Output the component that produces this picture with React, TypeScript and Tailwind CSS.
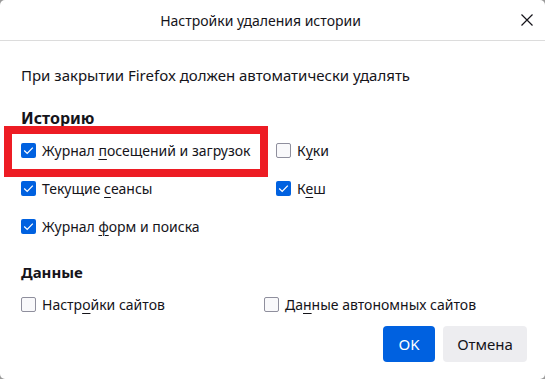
type Item = { label: string; key: number; checked: boolean };

const HISTORY: Item[][] = [
  [
    { label: 'Журнал посещений и загрузок', key: 7, checked: true },
    { label: 'Куки', key: 1, checked: false },
  ],
  [
    { label: 'Текущие сеансы', key: 8, checked: true },
    { label: 'Кеш', key: 1, checked: true },
  ],
  [{ label: 'Журнал форм и поиска', key: 7, checked: true }],
];

const DATA: Item[] = [
  { label: 'Настройки сайтов', key: 5, checked: false },
  { label: 'Данные автономных сайтов', key: 2, checked: false },
];

function Box({ checked }: { checked: boolean }) {
  if (checked) {
    return (
      <span className="w-[15px] h-[15px] rounded-[2px] bg-[#0061e0] flex items-center justify-center shrink-0">
        <svg width="15" height="15" viewBox="0 0 15 15" fill="none">
          <path d="M3.2 7.6 L6.2 10.4 L11.8 4.6" stroke="white" strokeWidth="1.3" />
        </svg>
      </span>
    );
  }
  return <span className="w-[15px] h-[15px] rounded-[2px] border border-[#8f8f9d] bg-[#f9f9fb] shrink-0" />;
}

function Check({ item, width }: { item: Item; width?: string }) {
  const { label, key } = item;
  return (
    <div className={`flex items-center gap-[6px] whitespace-nowrap ${width ?? ''}`}>
      <Box checked={item.checked} />
      <span className="text-[14px]">
        {label.slice(0, key)}
        <span className="underline underline-offset-[3px] decoration-1">{label.slice(key, key + 1)}</span>
        {label.slice(key + 1)}
      </span>
    </div>
  );
}

export default function App() {
  return (
    <div className="w-[545px] h-[379px] bg-[#9a9a9a] font-['Noto_Sans',sans-serif] text-[#15141a] text-[15px]">
      <div className="relative w-full h-full bg-white rounded-[5px] flex flex-col overflow-hidden">
        <div className="h-[41px] shrink-0 flex items-center border-b border-[#dcdcdc]">
          <div className="flex-1 text-center pl-[12px] text-[14px]">Настройки удаления истории</div>
          <button className="w-[36px] h-[40px] flex items-center justify-center">
            <svg width="12" height="12" viewBox="0 0 12 12" fill="none">
              <path d="M0.5 0.5 L11.5 11.5 M11.5 0.5 L0.5 11.5" stroke="#15141a" strokeWidth="1.2" />
            </svg>
          </button>
        </div>

        <div className="flex flex-col px-[21px]">
          <div className="h-[22px] mt-[23px] flex items-center">
            При закрытии Firefox должен автоматически удалять
          </div>
          <div className="h-[26px] mt-[19px] flex items-center font-bold text-[16px]">Историю</div>
          {HISTORY.map((row, i) => (
            <div key={i} className="h-[38px] flex items-center">
              {row.map((it, j) => (
                <Check key={j} item={it} width={j === 0 ? 'w-[255px]' : ''} />
              ))}
            </div>
          ))}
          <div className="h-[26px] mt-[14px] flex items-center font-bold text-[15px]">Данные</div>
          <div className="h-[38px] flex items-center">
            <Check item={DATA[0]} width="w-[243px]" />
            <Check item={DATA[1]} />
          </div>
        </div>

        <div className="flex justify-end gap-[8px] pr-[18px] mt-[3px]">
          <button className="w-[52px] h-[36px] rounded-[4px] bg-[#0061e0] text-white">OK</button>
          <button className="w-[84px] h-[36px] rounded-[4px] bg-[#ededf0]">Отмена</button>
        </div>

        <div className="absolute left-[4px] top-[126px] w-[264px] h-[51px] border-[8px] border-[#ed1c24]" />
      </div>
    </div>
  );
}
